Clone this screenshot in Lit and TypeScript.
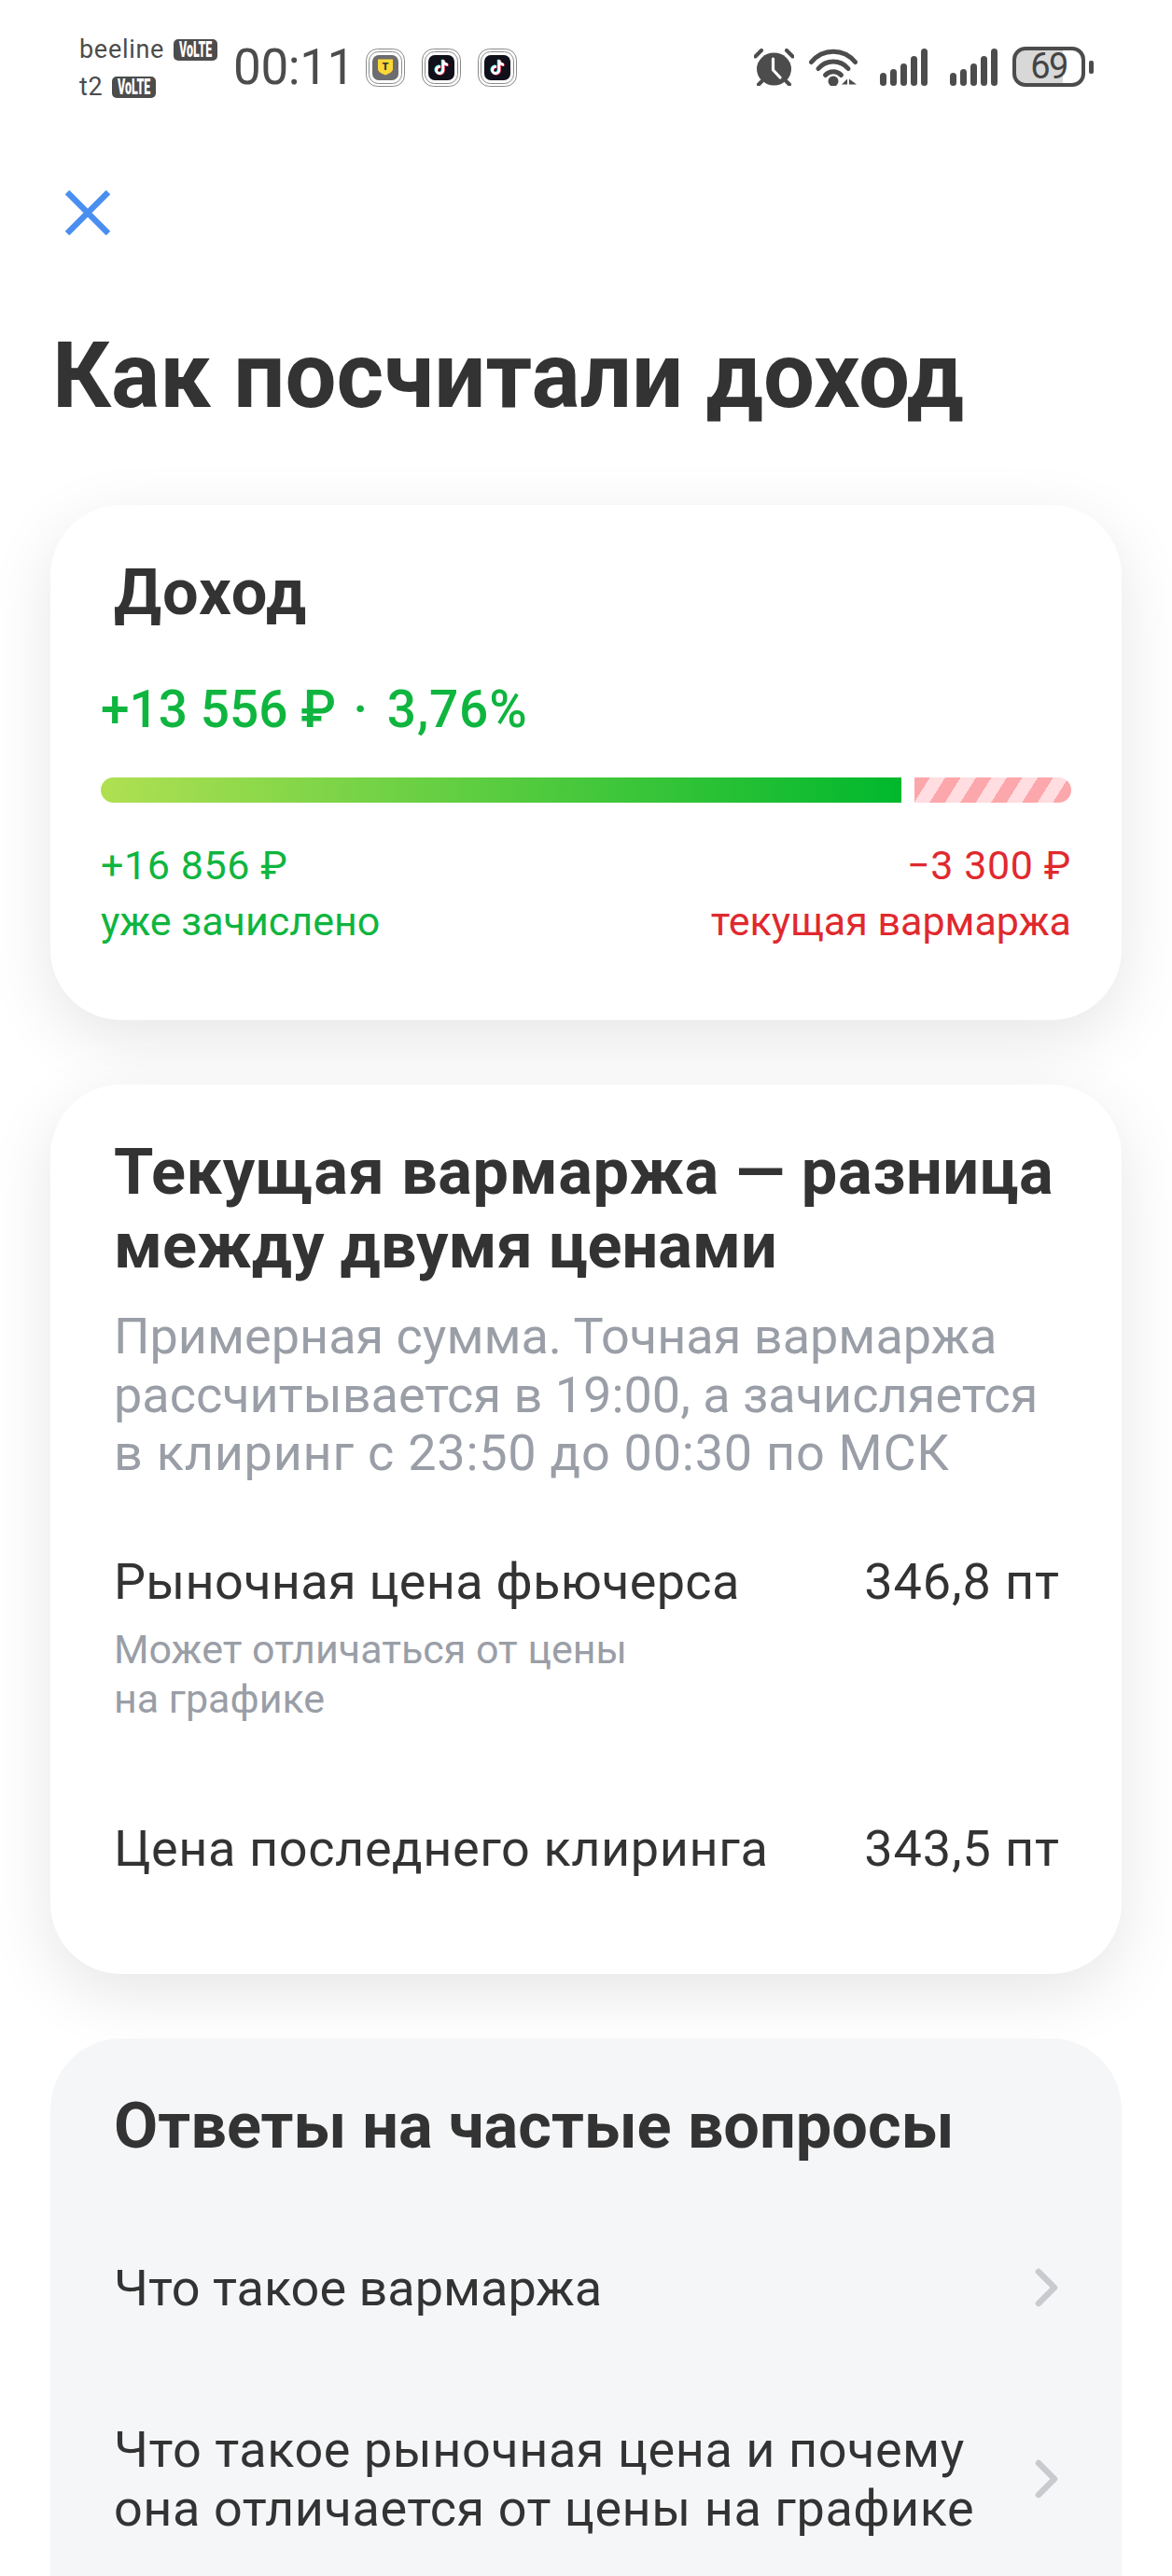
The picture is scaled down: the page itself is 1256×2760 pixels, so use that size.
import { LitElement, html, css, svg } from "lit";
import { customElement } from "lit/decorators.js";

const note = "M16.6 5.82a4.28 4.28 0 0 1-1.04-2.82h-3.09v12.4a2.59 2.59 0 0 1-2.6 2.5 2.6 2.6 0 0 1-2.6-2.6c0-1.72 1.66-3.01 3.37-2.48V9.66c-3.45-.46-6.47 2.22-6.47 5.64 0 3.33 2.76 5.7 5.69 5.7 3.14 0 5.69-2.55 5.69-5.7V9.01a7.35 7.35 0 0 0 4.3 1.38V7.3s-1.88.09-3.25-1.48z";

const frames = svg`
  <rect x="0.5" y="0.5" width="41" height="40" rx="12" fill="#fff" stroke="#8a8a8a" stroke-width="1"/>
  <rect x="3.5" y="3.5" width="35" height="34" rx="10" fill="none" stroke="#8a8a8a" stroke-width="1"/>`;

const appT = html`<svg class="app" width="42" height="41" viewBox="0 0 42 41">
  ${frames}
  <rect x="7" y="7" width="28" height="27" rx="7" fill="#6d6d70"/>
  <path d="M13 11.5h16v10.5c0 3-4 4.800-8 6.500-4-1.700-8-3.500-8-6.500z" fill="#fdd835"/>
  <text x="21" y="23" text-anchor="middle" font-size="11" font-weight="900" font-family="Roboto, sans-serif" fill="#333">T</text>
</svg>`;

const appTok = html`<svg class="app" width="42" height="41" viewBox="0 0 42 41">
  ${frames}
  <rect x="7" y="7" width="28" height="27" rx="7" fill="#10101a"/>
  <g transform="translate(10.500 9.500) scale(.88)">
    <path d=${note} fill="#25f4ee" transform="translate(-.8 -.5)"/>
    <path d=${note} fill="#fe2c55" transform="translate(.8 .5)"/>
    <path d=${note} fill="#fff"/>
  </g>
</svg>`;

const alarm = html`<svg width="43" height="40" viewBox="0 0 43 40">
  <g stroke="#4c4c4c" stroke-width="4" stroke-linecap="round" fill="none">
    <path d="M1.500 8.500 8 2"/><path d="M41.500 8.500 35 2"/>
    <path d="M5 38.500 8.500 35"/><path d="M38 38.500 34.500 35"/>
  </g>
  <ellipse cx="21.500" cy="22" rx="18.500" ry="17.500" fill="#4c4c4c"/>
  <path d="M20.500 11v12l7.500 8" fill="none" stroke="#fff" stroke-width="3.200" stroke-linecap="round" stroke-linejoin="round"/>
</svg>`;

const wifi = html`<svg width="52" height="40" viewBox="0 0 52 40">
  <g fill="none" stroke="#4c4c4c" stroke-width="5" stroke-linecap="round">
    <path d="M2.500 14.500C15 -.5 37 -.5 49.500 14.500"/>
    <path d="M10 21.500C18.500 11.500 33.500 11.500 42 21.500"/>
    <path d="M17.500 28.500C22 23.500 30 23.500 34.500 28.500"/>
  </g>
  <circle cx="26" cy="35" r="5.500" fill="#4c4c4c"/>
  <path d="M35 38.500 41 32.500V38.500zM43 32.500 51 38.500H43z" fill="#4c4c4c"/>
</svg>`;

const signal = html`<svg width="51" height="40" viewBox="0 0 51 40">
  ${[14, 18, 24, 32, 40].map((h, i) => svg`<rect x=${i * 11} y=${40 - h} width="7" height=${h} rx="3.500" fill="#4c4c4c"/>`)}
</svg>`;

const chevron = html`<svg class="chev" width="26" height="42" viewBox="0 0 26 42">
  <path d="M4 4 21 21 4 38" fill="none" stroke="#c8cacd" stroke-width="6.500" stroke-linecap="round" stroke-linejoin="round"/>
</svg>`;

@customElement("app-root")
export class AppRoot extends LitElement {
  static styles = css`
    :host {
      display: block;
      width: 1256px;
      height: 2760px;
      overflow: hidden;
      background: #fff;
      font-family: "Roboto", "Noto Sans", sans-serif;
      color: #333;
    }
    .status {
      height: 204px;
      box-sizing: border-box;
      padding: 33px 84px 0 85px;
      display: flex;
      justify-content: space-between;
      align-items: flex-start;
      color: #4c4c4c;
    }
    .left { display: flex; align-items: flex-start; }
    .carriers {
      width: 165px;
      font-size: 27px;
      line-height: 40px;
      letter-spacing: 0.7px;
    }
    .carrier { display: flex; align-items: center; gap: 10px; height: 40px; }
    .volte {
      display: flex;
      justify-content: center;
      align-items: center;
      flex: none;
      background: #4c4c4c;
      border-radius: 5px;
      height: 23px;
      width: 47px;
      overflow: visible;
    }
    .volte span {
      display: block;
      flex: none;
      color: #fff;
      font-size: 23px;
      font-weight: 900;
      line-height: 23px;
      letter-spacing: 0;
      white-space: nowrap;
      transform: scaleX(0.54);
    }
    .time {
      font-size: 53px;
      line-height: 60px;
      margin-top: 9px;
      width: 142px;
      letter-spacing: -0.4px;
      white-space: nowrap;
    }
    .apps { display: flex; gap: 18px; margin-top: 19px; }
    .app { display: block; }
    .right { display: flex; align-items: flex-start; padding-top: 19px; }
    .right svg { display: block; flex: none; }
    .alarm { margin-right: 16px; }
    .wifi { margin-right: 24px; }
    .sig1 { margin-right: 24px; }
    .sig2 { margin-right: 16px; }
    .battery {
      margin-top: -2px;
      width: 78px;
      height: 43px;
      box-sizing: border-box;
      border: 4px solid #4c4c4c;
      border-radius: 14px;
      text-align: center;
      font-size: 38px;
      line-height: 35px;
      letter-spacing: -1.500px;
      color: #444;
      background: linear-gradient(90deg, #d8d8d8 0 50px, #fff 50px);
      background-clip: padding-box;
    }
    .nub {
      width: 5px;
      height: 14px;
      background: #4c4c4c;
      border-radius: 2px;
      margin: 13px 0 0 4px;
    }
    .close { display: block; margin-left: 70px; }
    h1 {
      margin: 101px 0 88px 56px;
      font-size: 97.500px;
      line-height: 100px;
      font-weight: 700;
      white-space: nowrap;
    }
    .stack { display: flex; flex-direction: column; gap: 69px; margin: 0 54px; }
    .card {
      border-radius: 76px;
      background: #fff;
      box-shadow: 0 20px 70px rgba(0, 0, 0, 0.1);
      padding: 54px 67px 0 68px;
    }
    .card.faq { background: #f5f6f8; box-shadow: none; height: 700px; }
    h2 {
      margin: 0;
      font-size: 68.500px;
      line-height: 79px;
      font-weight: 700;
      white-space: nowrap;
    }
    .tight { letter-spacing: 1px; }
    .spread { letter-spacing: 0.6px; }
    .income { height: 498px; padding-left: 0; padding-right: 0; }
    .income h2 { margin-left: 68px; }
    .income .inner { margin: 0 54px; }
    .amount {
      margin-top: 51px;
      font-size: 55px;
      line-height: 70px;
      font-weight: 500;
      color: #0fb53f;
      white-space: nowrap;
    }
    .dot { margin: 0 7px 0 5px; }
    .pct { letter-spacing: 0.8px; }
    .bar { display: flex; gap: 14px; margin-top: 38px; height: 27px; }
    .fill {
      width: 858px;
      background: linear-gradient(90deg, #b0e052, #00b82d);
      border-radius: 14px 0 0 14px;
    }
    .rest {
      flex: 1;
      border-radius: 0 14px 14px 0;
      background: repeating-linear-gradient(122deg, #fca7ab 0 14px, #ffdde0 14px 28px);
    }
    .totals { display: flex; justify-content: space-between; margin-top: 37px; font-size: 43px; line-height: 60px; }
    .num { letter-spacing: 0.6px; }
    .good { color: #0fb53f; }
    .bad { color: #e0292e; text-align: right; }
    .sub {
      margin-top: 27px;
      font-size: 54px;
      line-height: 62.500px;
      color: #9a9ea7;
      white-space: nowrap;
    }
    .wide { letter-spacing: 0.75px; }
    .row { display: flex; justify-content: space-between; font-size: 54px; line-height: 66px; white-space: nowrap; margin-right: -1px; }
    .val { letter-spacing: 0.9px; }
    .row.first { margin-top: 73px; letter-spacing: 0.3px; }
    .row.second { margin-top: 101px; letter-spacing: 0.6px; }
    .note { margin-top: 13px; font-size: 43px; line-height: 53px; color: #9a9ea7; }
    .end { height: 101px; }
    .faq-row { display: flex; justify-content: space-between; align-items: center; font-size: 54px; line-height: 63px; white-space: nowrap; }
    .faq-row.a { margin-top: 103px; }
    .faq-row.b { margin-top: 110px; letter-spacing: 0.55px; }
    .chev { flex: none; }
  `;

  render() {
    return html`
      <div class="status">
        <div class="left">
          <div class="carriers">
            <div class="carrier">beeline <span class="volte"><span>VoLTE</span></span></div>
            <div class="carrier">t2 <span class="volte"><span>VoLTE</span></span></div>
          </div>
          <div class="time">00:11</div>
          <div class="apps">${appT}${appTok}${appTok}</div>
        </div>
        <div class="right">
          <span class="alarm">${alarm}</span>
          <span class="wifi">${wifi}</span>
          <span class="sig1">${signal}</span>
          <span class="sig2">${signal}</span>
          <div class="battery">69</div>
          <div class="nub"></div>
        </div>
      </div>
      <svg class="close" width="48" height="48" viewBox="0 0 48 48">
        <path d="M2 2 46 46M46 2 2 46" stroke="#4a8ff0" stroke-width="6.500" fill="none"/>
      </svg>
      <h1>Как посчитали доход</h1>
      <div class="stack">
        <section class="card income">
          <h2 class="tight">Доход</h2>
          <div class="inner">
            <div class="amount">+13 556 ₽ <span class="dot">·</span> <span class="pct">3,76%</span></div>
            <div class="bar"><div class="fill"></div><div class="rest"></div></div>
            <div class="totals">
              <div class="good"><span class="num">+16 856 ₽</span><br />уже зачислено</div>
              <div class="bad"><span class="num">−3 300 ₽</span><br />текущая вармаржа</div>
            </div>
          </div>
        </section>
        <section class="card">
          <h2><span class="spread">Текущая вармаржа — разница</span><br />между двумя ценами</h2>
          <div class="sub">Примерная сумма. Точная вармаржа<br />рассчитывается в 19:00, а зачисляется<br /><span class="wide">в клиринг с 23:50 до 00:30 по МСК</span></div>
          <div class="row first"><span>Рыночная цена фьючерса</span><span class="val">346,8 пт</span></div>
          <div class="note">Может отличаться от цены<br />на графике</div>
          <div class="row second"><span>Цена последнего клиринга</span><span class="val">343,5 пт</span></div>
          <div class="end"></div>
        </section>
        <section class="card faq">
          <h2>Ответы на частые вопросы</h2>
          <div class="faq-row a"><span>Что такое вармаржа</span>${chevron}</div>
          <div class="faq-row b"><span>Что такое рыночная цена и почему<br />она отличается от цены на графике</span>${chevron}</div>
        </section>
      </div>
    `;
  }
}
